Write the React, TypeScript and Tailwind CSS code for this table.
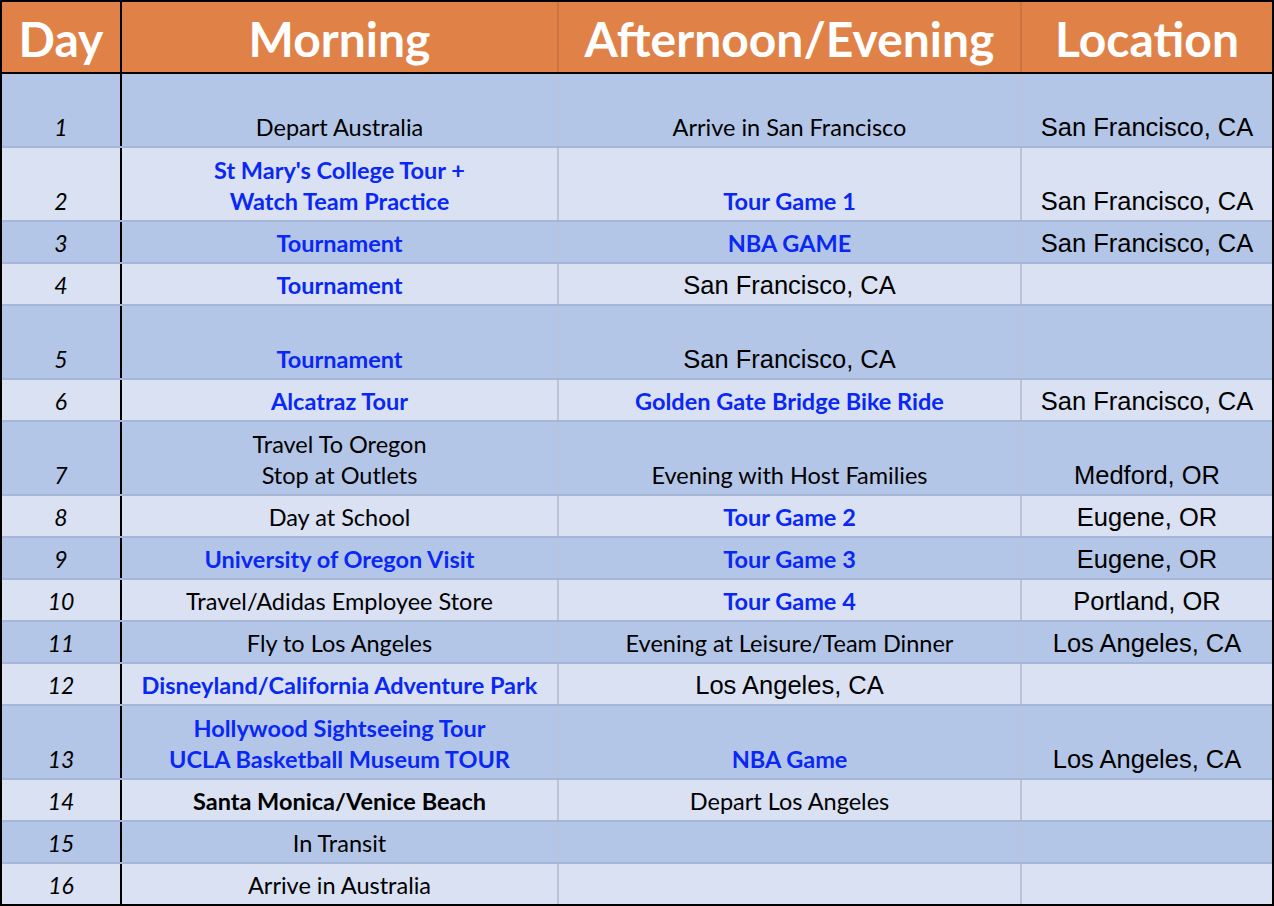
type Kind = "plain" | "blue" | "bold" | "arial";

interface Cell {
  lines: string[];
  kind?: Kind;
}

interface Row {
  day: string;
  tall?: boolean;
  morning: Cell;
  afternoon: Cell;
  location: string;
}

const c = (text: string | string[], kind: Kind = "plain"): Cell => ({
  lines: Array.isArray(text) ? text : text ? [text] : [],
  kind,
});

const rows: Row[] = [
  { day: "1", tall: true, morning: c("Depart Australia"), afternoon: c("Arrive in San Francisco"), location: "San Francisco, CA" },
  { day: "2", tall: true, morning: c(["St Mary's College Tour +", "Watch Team Practice"], "blue"), afternoon: c("Tour Game 1", "blue"), location: "San Francisco, CA" },
  { day: "3", morning: c("Tournament", "blue"), afternoon: c("NBA GAME", "blue"), location: "San Francisco, CA" },
  { day: "4", morning: c("Tournament", "blue"), afternoon: c("San Francisco, CA", "arial"), location: "" },
  { day: "5", tall: true, morning: c("Tournament", "blue"), afternoon: c("San Francisco, CA", "arial"), location: "" },
  { day: "6", morning: c("Alcatraz Tour", "blue"), afternoon: c("Golden Gate Bridge Bike Ride", "blue"), location: "San Francisco, CA" },
  { day: "7", tall: true, morning: c(["Travel To Oregon", "Stop at Outlets"]), afternoon: c("Evening with Host Families"), location: "Medford, OR" },
  { day: "8", morning: c("Day at School"), afternoon: c("Tour Game 2", "blue"), location: "Eugene, OR" },
  { day: "9", morning: c("University of Oregon Visit", "blue"), afternoon: c("Tour Game 3", "blue"), location: "Eugene, OR" },
  { day: "10", morning: c("Travel/Adidas Employee Store"), afternoon: c("Tour Game 4", "blue"), location: "Portland, OR" },
  { day: "11", morning: c("Fly to Los Angeles"), afternoon: c("Evening at Leisure/Team Dinner"), location: "Los Angeles, CA" },
  { day: "12", morning: c("Disneyland/California Adventure Park", "blue"), afternoon: c("Los Angeles, CA", "arial"), location: "" },
  { day: "13", tall: true, morning: c(["Hollywood Sightseeing Tour", "UCLA Basketball Museum TOUR"], "blue"), afternoon: c("NBA Game", "blue"), location: "Los Angeles, CA" },
  { day: "14", morning: c("Santa Monica/Venice Beach", "bold"), afternoon: c("Depart Los Angeles"), location: "" },
  { day: "15", morning: c("In Transit"), afternoon: c(""), location: "" },
  { day: "16", morning: c("Arrive in Australia"), afternoon: c(""), location: "" },
];

const kindClass: Record<Kind, string> = {
  plain: "font-['Lato',sans-serif] text-[23.5px] text-black",
  blue: "font-['Lato',sans-serif] text-[23.5px] font-bold text-[#0a28f5]",
  bold: "font-['Lato',sans-serif] text-[23.5px] font-bold text-black",
  arial: "font-['Liberation_Sans',Arial,sans-serif] text-[25.5px] text-black",
};

const CellText = ({ cell }: { cell: Cell }) => (
  <div className={`flex flex-col items-center text-center leading-[31px] ${kindClass[cell.kind ?? "plain"]}`}>
    {cell.lines.map((line) => (
      <span key={line} className="whitespace-nowrap">{line}</span>
    ))}
  </div>
);

const App = () => {
  return (
    <div className="w-[1274px] h-[906px] bg-white">
      <div className="w-[1274px] border-2 border-black">
        <div className="flex h-[72px] bg-[#e08248] border-b-2 border-black font-['Lato',sans-serif] font-bold text-white text-[48px] leading-none">
          <div className="w-[120px] border-r-2 border-black flex items-center justify-center pt-[3px]">Day</div>
          <div className="w-[437px] border-r-2 border-[#cc7440] flex items-center justify-center pt-[3px]">Morning</div>
          <div className="w-[463px] border-r-2 border-[#cc7440] flex items-center justify-center pt-[3px]">Afternoon/Evening</div>
          <div className="w-[250px] flex items-center justify-center pt-[3px]">Location</div>
        </div>

        {rows.map((row, i) => {
          const last = i === rows.length - 1;
          const bg = i % 2 === 0 ? "bg-[#b4c6e7]" : "bg-[#d9e1f2]";
          const size = last ? "h-[40px]" : row.tall ? "h-[74px] border-b-2 border-[#a6b6d6]" : "h-[42px] border-b-2 border-[#a6b6d6]";
          return (
            <div key={row.day} className={`flex ${bg} ${size}`}>
              <div className="w-[120px] border-r-2 border-black flex items-end justify-center pb-[3px] font-['Lato',sans-serif] italic text-[23px] leading-[31px] text-black">
                {row.day}
              </div>
              <div className="w-[437px] border-r-2 border-[#b9c4d9] flex items-end justify-center pb-[3px]">
                <CellText cell={row.morning} />
              </div>
              <div className="w-[463px] border-r-2 border-[#b9c4d9] flex items-end justify-center pb-[3px]">
                <CellText cell={row.afternoon} />
              </div>
              <div className="w-[250px] flex items-end justify-center pb-[3px]">
                <CellText cell={c(row.location, "arial")} />
              </div>
            </div>
          );
        })}
      </div>
    </div>
  );
};

export default App;
